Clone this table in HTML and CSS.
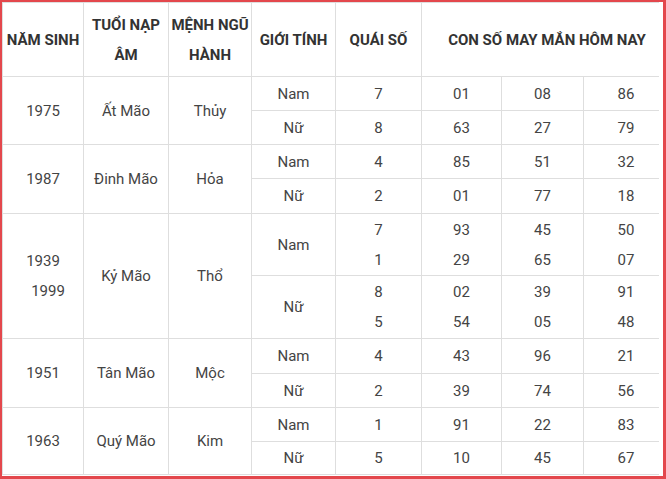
FILE: index.html
```html
<!DOCTYPE html>
<html lang="vi">
<head>
<meta charset="utf-8">
<title>Con số may mắn tuổi Mão</title>
<link rel="stylesheet" href="styles.css">
</head>
<body>
<div class="frame">
  <div class="grid">
    <div class="c h">NĂM SINH</div>
    <div class="c h">TUỔI NẠP ÂM</div>
    <div class="c h">MỆNH NGŨ HÀNH</div>
    <div class="c h">GIỚI TÍNH</div>
    <div class="c h">QUÁI SỐ</div>
    <div class="c h span3">CON SỐ MAY MẮN HÔM NAY</div>

    <div class="c r2">1975</div>
    <div class="c r2">Ất Mão</div>
    <div class="c r2">Thủy</div>
    <div class="c">Nam</div><div class="c">7</div><div class="c">01</div><div class="c">08</div><div class="c k">86</div>
    <div class="c">Nữ</div><div class="c">8</div><div class="c">63</div><div class="c">27</div><div class="c k">79</div>

    <div class="c r2">1987</div>
    <div class="c r2">Đinh Mão</div>
    <div class="c r2">Hỏa</div>
    <div class="c">Nam</div><div class="c">4</div><div class="c">85</div><div class="c">51</div><div class="c k">32</div>
    <div class="c">Nữ</div><div class="c">2</div><div class="c">01</div><div class="c">77</div><div class="c k">18</div>

    <div class="c r2"><div>1939<br><span class="ind">1999</span></div></div>
    <div class="c r2">Kỷ Mão</div>
    <div class="c r2">Thổ</div>
    <div class="c">Nam</div><div class="c"><div>7<br>1</div></div><div class="c"><div>93<br>29</div></div><div class="c"><div>45<br>65</div></div><div class="c k"><div>50<br>07</div></div>
    <div class="c">Nữ</div><div class="c"><div>8<br>5</div></div><div class="c"><div>02<br>54</div></div><div class="c"><div>39<br>05</div></div><div class="c k"><div>91<br>48</div></div>

    <div class="c r2">1951</div>
    <div class="c r2">Tân Mão</div>
    <div class="c r2">Mộc</div>
    <div class="c">Nam</div><div class="c">4</div><div class="c">43</div><div class="c">96</div><div class="c k">21</div>
    <div class="c">Nữ</div><div class="c">2</div><div class="c">39</div><div class="c">74</div><div class="c k">56</div>

    <div class="c r2">1963</div>
    <div class="c r2">Quý Mão</div>
    <div class="c r2">Kim</div>
    <div class="c">Nam</div><div class="c">1</div><div class="c">91</div><div class="c">22</div><div class="c k">83</div>
    <div class="c">Nữ</div><div class="c">5</div><div class="c">10</div><div class="c">45</div><div class="c k">67</div>
  </div>
</div>
</body>
</html>
```

FILE: styles.css
```css
* { box-sizing: border-box; }
html, body { margin: 0; padding: 0; background: #ffffff; }
body {
  font-family: Roboto, "Liberation Sans", Arial, sans-serif;
  font-size: 15px;
  color: #444444;
}
.frame {
  width: 666px;
  height: 479px;
  border-style: solid;
  border-color: #e3474c;
  border-width: 2px 3px 3px 2px;
  padding: 0 3px 1px 0;
  background: #ffffff;
  overflow: hidden;
}
.grid {
  display: grid;
  grid-template-columns: 80px 84px 82px 83px 85px 79px 81px 75px;
  grid-template-rows: 73px 33px 33px 33px 34px 61px 62px 34px 33px 33px 32px;
  gap: 1px;
  background: #dedede;
  border: 1px solid #dedede;
  width: 657px;
}
.c {
  background: #ffffff;
  display: flex;
  align-items: center;
  justify-content: center;
  text-align: center;
  line-height: 30px;
  padding: 0;
}
.h {
  font-weight: 700;
  color: #333333;
}
.span3 { grid-column: span 3; padding-left: 13px; }
.r2 { grid-row: span 2; }
.k { padding-left: 9px; }
.ind { padding-left: 10px; }
```
